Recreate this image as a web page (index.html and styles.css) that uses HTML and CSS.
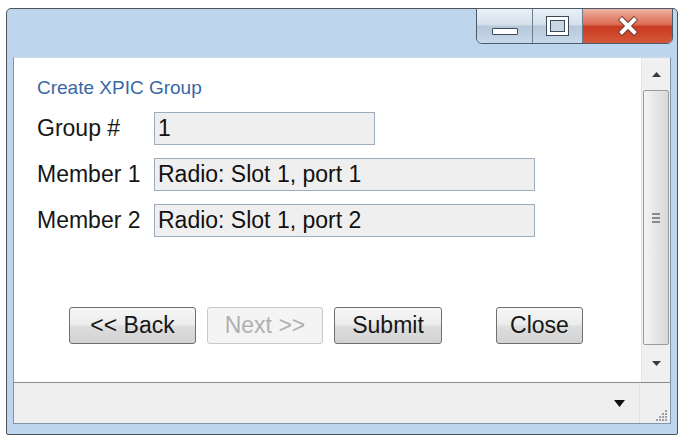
FILE: index.html
```html
<!DOCTYPE html>
<html lang="en">
<head>
    <meta charset="UTF-8">
    <title>Create XPIC Group</title>
    <link rel="stylesheet" href="styles.css">
</head>
<body>

    <div class="window">
        <div class="titlebar">
            <div class="caption">
                <button class="cap cap-min"><span class="min-icon"></span></button>
                <button class="cap cap-max"><span class="max-icon"></span></button>
                <button class="cap cap-close">
                    <svg width="24" height="20" viewBox="0 0 24 20">
                        <path d="M4 2 L20 18 M20 2 L4 18" stroke="#6a2e24" stroke-width="6"/>
                        <path d="M4.5 2.5 L19.5 17.5 M19.5 2.5 L4.5 17.5" stroke="#fff" stroke-width="4"/>
                    </svg>
                </button>
            </div>
        </div>

        <div class="client">
            <div class="pane">
                <div class="form">
                    <div class="heading">Create XPIC Group</div>
                    <div class="fields">
                        <label>Group #</label>
                        <input class="field short" type="text" value="1" readonly>
                        <label>Member 1</label>
                        <input class="field" type="text" value="Radio: Slot 1, port 1" readonly>
                        <label>Member 2</label>
                        <input class="field" type="text" value="Radio: Slot 1, port 2" readonly>
                    </div>
                    <div class="actions">
                        <button class="btn btn-back">&lt;&lt; Back</button>
                        <button class="btn btn-next" disabled>Next &gt;&gt;</button>
                        <button class="btn btn-submit">Submit</button>
                        <button class="btn btn-close">Close</button>
                    </div>
                </div>

                <div class="scrollbar">
                    <div class="scroll-btn scroll-up">
                        <svg width="9" height="5" viewBox="0 0 9 5"><path d="M0 5 L4.5 0 L9 5 Z" fill="#3c3c3c"/></svg>
                    </div>
                    <div class="thumb">
                        <span class="grip"></span>
                    </div>
                    <div class="scroll-btn scroll-down">
                        <svg width="9" height="5" viewBox="0 0 9 5"><path d="M0 0 L9 0 L4.5 5 Z" fill="#3c3c3c"/></svg>
                    </div>
                </div>
            </div>

            <div class="statusbar">
                <div class="status-main">
                    <svg width="11" height="7" viewBox="0 0 11 7"><path d="M0 0 L11 0 L5.5 7 Z" fill="#111"/></svg>
                </div>
                <div class="status-corner">
                    <svg width="12" height="12" viewBox="0 0 12 12" fill="#9aa0a8">
                        <rect x="9" y="1" width="2" height="2"/>
                        <rect x="6" y="4" width="2" height="2"/><rect x="9" y="4" width="2" height="2"/>
                        <rect x="3" y="7" width="2" height="2"/><rect x="6" y="7" width="2" height="2"/><rect x="9" y="7" width="2" height="2"/>
                        <rect x="0" y="10" width="2" height="2"/><rect x="3" y="10" width="2" height="2"/><rect x="6" y="10" width="2" height="2"/><rect x="9" y="10" width="2" height="2"/>
                    </svg>
                </div>
            </div>
        </div>
    </div>

</body>
</html>
```

FILE: styles.css
```css
body {
    margin: 0;
    padding: 0;
    background: #fff;
    font-family: "Liberation Sans", Arial, sans-serif;
}

.window {
    box-sizing: border-box;
    width: 672px;
    height: 427px;
    margin: 8px 0 0 6px;
    border: 1px solid #4f5257;
    border-radius: 5px 5px 2px 2px;
    background: #bdd6ee;
    padding: 0 6px 10px 6px;
    display: flex;
    flex-direction: column;
}

/* title bar with the three caption buttons */
.titlebar {
    height: 48px;
    margin: 0 -6px;
    padding-right: 4px;
    display: flex;
    justify-content: flex-end;
    align-items: flex-start;
}

.caption {
    display: flex;
    height: 34px;
    margin-top: -1px;
    border: 1px solid #4d5a6a;
    border-radius: 0 0 6px 6px;
    overflow: hidden;
}

.cap {
    border: none;
    margin: 0;
    padding: 0;
    height: 100%;
    display: flex;
    align-items: center;
    justify-content: center;
    background: linear-gradient(#e9f0f7, #d5e0ec 45%, #b7c8db 52%, #c8d9ea);
}

.cap-min {
    width: 56px;
    border-right: 1px solid #6c7c8e;
    align-items: flex-end;
    padding-bottom: 8px;
    box-sizing: border-box;
}

.cap-max {
    width: 50px;
    border-right: 1px solid #6c7c8e;
}

.cap-close {
    width: 89px;
    background: linear-gradient(#eeb2a2, #dc6c54 45%, #c83a22 52%, #d4573a);
}

.min-icon {
    display: block;
    width: 24px;
    height: 5px;
    background: #fff;
    border: 1px solid #3c4a5a;
    border-radius: 1px;
}

.max-icon {
    display: block;
    box-sizing: border-box;
    width: 21px;
    height: 18px;
    border: 3px solid #fff;
    outline: 1px solid #3c4a5a;
    box-shadow: inset 0 0 0 1px #3c4a5a;
    background: #c9d6e4;
}

/* client area */
.client {
    flex: 1;
    display: flex;
    flex-direction: column;
    border: 1px solid #7f93ab;
    border-top-color: #cbdaea;
    background: #fff;
}

.pane {
    height: 324px;
    display: flex;
}

.form {
    flex: 1;
    padding: 19px 0 0 23px;
}

.heading {
    font-size: 19px;
    line-height: 22px;
    color: #3a67a6;
}

.fields {
    margin-top: 13px;
    display: grid;
    grid-template-columns: 117px auto;
    row-gap: 13px;
    align-items: center;
}

.fields label {
    font-size: 23px;
    color: #161616;
}

.field {
    box-sizing: border-box;
    width: 381px;
    height: 33px;
    margin: 0;
    padding: 0 3px;
    border: 1px solid #9eacbd;
    background: #efefef;
    font-family: "Liberation Sans", Arial, sans-serif;
    font-size: 23px;
    color: #111;
    outline: none;
}

.field.short {
    width: 221px;
}

.actions {
    display: flex;
    gap: 11px;
    margin: 70px 0 0 32px;
}

.btn {
    box-sizing: border-box;
    height: 37px;
    padding: 0;
    border: 1px solid #6f6f6f;
    border-radius: 3px;
    background: linear-gradient(#f7f7f7, #ebebeb 48%, #dedede 52%, #d2d2d2);
    font-family: "Liberation Sans", Arial, sans-serif;
    font-size: 23px;
    color: #161616;
}

.btn-back {
    width: 127px;
}

.btn-next {
    width: 116px;
    border-color: #c9c9c9;
    background: #f4f4f4;
    color: #b0b0b0;
}

.btn-submit {
    width: 108px;
}

.btn-close {
    width: 87px;
    margin-left: 43px;
}

/* vertical scrollbar */
.scrollbar {
    width: 29px;
    display: flex;
    flex-direction: column;
    background: #f0f0f0;
    border-left: 1px solid #e4e4e4;
    box-sizing: border-box;
}

.scroll-btn {
    display: flex;
    align-items: center;
    justify-content: center;
}

.scroll-up {
    height: 32px;
}

.scroll-down {
    height: 37px;
}

.thumb {
    flex: 1;
    margin: 0 1px;
    border: 1px solid #9b9b9b;
    border-radius: 2px;
    background: linear-gradient(to right, #f5f5f5, #e6e6e6 50%, #d8d8d8);
    display: flex;
    align-items: center;
    justify-content: center;
}

.grip {
    display: block;
    width: 8px;
    height: 2px;
    background: #8a8a8a;
    box-shadow: 0 -4px 0 #8a8a8a, 0 4px 0 #8a8a8a;
}

/* status bar */
.statusbar {
    flex: 1;
    display: flex;
    background: #f0efef;
    border-top: 1px solid #8c8c8c;
}

.status-main {
    flex: 1;
    display: flex;
    align-items: center;
    justify-content: flex-end;
    padding-right: 14px;
}

.status-corner {
    width: 28px;
    border-left: 1px solid #e2e2e2;
    display: flex;
    align-items: flex-end;
    justify-content: flex-end;
    padding: 0 2px 2px 0;
}
```
